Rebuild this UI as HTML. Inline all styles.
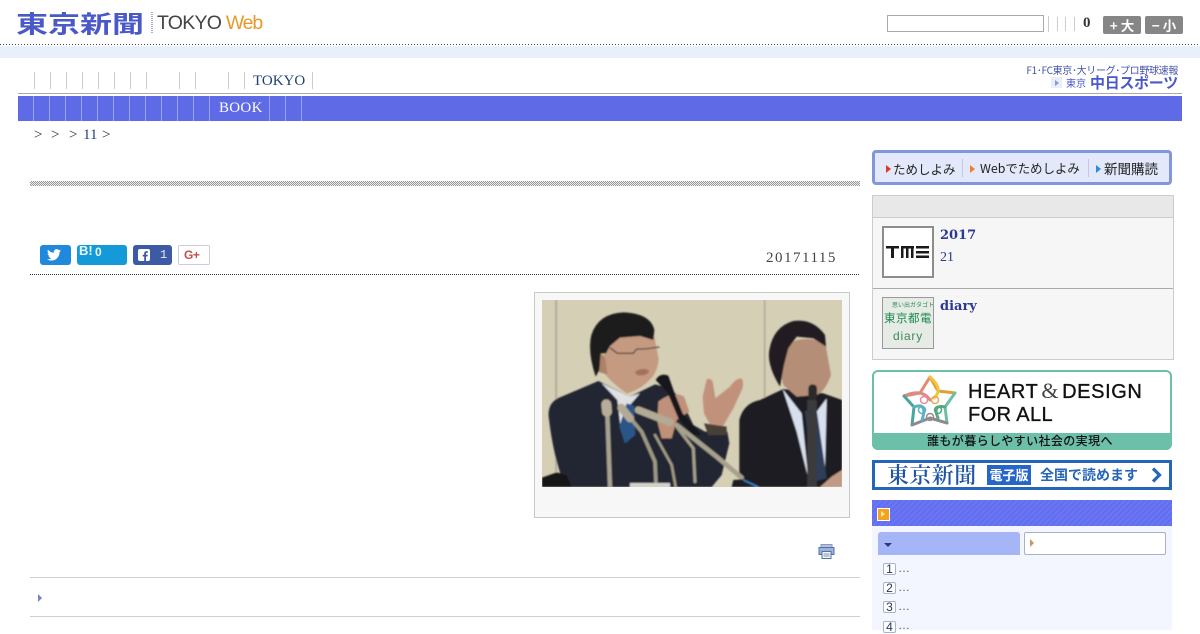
<!DOCTYPE html>
<html lang="ja">
<head>
<meta charset="utf-8">
<title>東京新聞 TOKYO Web</title>
<style>
html,body{margin:0;padding:0;background:#fff}
body{width:1200px;height:630px;overflow:hidden;position:relative;font-family:"Liberation Serif","Noto Serif CJK SC",serif}
.a{position:absolute;white-space:nowrap}
.s{font-family:"Liberation Sans","Noto Sans CJK JP",sans-serif}
.j{font-family:"Noto Sans CJK JP",sans-serif}
.v{position:absolute;width:1px}
.d{background:repeating-linear-gradient(90deg,#445 0 1px,transparent 1px 3px);height:1px}
.b{width:11px;height:10px;border:1px solid #a8b4cc;border-radius:2px;background:#fff;font-size:12px;line-height:10px;text-align:center;color:#2a3560}
.e{left:898px;font-size:12px;line-height:14px;color:#555;letter-spacing:.3px}
</style>
</head>
<body>
<!-- Header -->
<div class="a j" style="left:16px;top:1px;font-size:32px;line-height:44px;font-weight:700;color:#4a58c8;transform:scaleY(.74);transform-origin:0 50%">東京新聞</div>
<div class="a" style="left:151px;top:12px;width:2px;height:22px;background:repeating-linear-gradient(180deg,#a8acc0 0 1px,transparent 1px 2px)"></div>
<div class="a s" style="left:157px;top:11px;font-size:19.500px;line-height:24px;color:#444;letter-spacing:-.75px">TOKYO <span style="color:#e8982a;letter-spacing:-1.2px">Web</span></div>
<div class="a" style="left:887px;top:15px;width:155px;height:15px;border:1px solid #aaa;background:#fff"></div>
<div class="v" style="left:1048px;top:16px;height:16px;background:#ccc"></div>
<div class="v" style="left:1057px;top:17px;height:14px;background:#ccc"></div>
<div class="v" style="left:1065px;top:17px;height:14px;background:#ccc"></div>
<div class="v" style="left:1074px;top:17px;height:14px;background:#ccc"></div>
<div class="a" style="left:1083px;top:14px;font-size:15px;line-height:18px;font-weight:700;color:#333">0</div>
<div class="a j" style="left:1103px;top:16px;width:38px;height:18px;background:#868686;border-radius:2px;color:#fff;font-size:13.500px;font-weight:700;line-height:18px;text-align:center">+ 大</div>
<div class="a j" style="left:1145px;top:16px;width:38px;height:18px;background:#868686;border-radius:2px;color:#fff;font-size:13.500px;font-weight:700;line-height:18px;text-align:center">− 小</div>
<div class="a d" style="left:0;top:44px;width:1200px"></div>
<div class="a" style="left:0;top:46px;width:1200px;height:12px;background:#e9effb"></div>

<!-- Top nav -->
<div class="v" style="left:34px;top:72px;height:17px;background:#ccc"></div>
<div class="v" style="left:50px;top:72px;height:17px;background:#ccc"></div>
<div class="v" style="left:66px;top:72px;height:17px;background:#ccc"></div>
<div class="v" style="left:82px;top:72px;height:17px;background:#ccc"></div>
<div class="v" style="left:98px;top:72px;height:17px;background:#ccc"></div>
<div class="v" style="left:114px;top:72px;height:17px;background:#ccc"></div>
<div class="v" style="left:130px;top:72px;height:17px;background:#ccc"></div>
<div class="v" style="left:146px;top:72px;height:17px;background:#ccc"></div>
<div class="v" style="left:179px;top:72px;height:17px;background:#ccc"></div>
<div class="v" style="left:195px;top:72px;height:17px;background:#ccc"></div>
<div class="v" style="left:228px;top:72px;height:17px;background:#ccc"></div>
<div class="v" style="left:244px;top:72px;height:17px;background:#ccc"></div>
<div class="v" style="left:312px;top:72px;height:17px;background:#ccc"></div>
<div class="a" style="left:253px;top:72px;font-size:15px;line-height:18px;color:#1f3f77">TOKYO</div>
<div class="a j" style="right:22px;top:63px;font-size:10px;line-height:13px;color:#4452a8;letter-spacing:-.33px">F1･FC東京･大リーグ･プロ野球速報</div>
<div class="a" style="left:1051px;top:77px;width:11px;height:11px;background:#e8eefa"></div>
<div class="a" style="left:1055px;top:80px;width:0;height:0;border-left:4px solid #8a9ad0;border-top:3px solid transparent;border-bottom:3px solid transparent"></div>
<div class="a j" style="left:1066px;top:76px;font-size:10px;line-height:14px;color:#4a58c8">東京</div>
<div class="a j" style="left:1090px;top:73px;font-size:15px;line-height:19px;font-weight:700;color:#4a58c8;letter-spacing:-.3px">中日スポーツ</div>
<div class="a" style="left:18px;top:93px;width:1164px;height:1px;background:#aaa"></div>

<!-- Blue nav -->
<div class="a" style="left:18px;top:96px;width:1164px;height:25px;background:#5f6ae6"></div>
<div class="v" style="left:33px;top:96px;height:25px;background:#9aa2ee"></div>
<div class="v" style="left:49px;top:96px;height:25px;background:#9aa2ee"></div>
<div class="v" style="left:65px;top:96px;height:25px;background:#9aa2ee"></div>
<div class="v" style="left:81px;top:96px;height:25px;background:#9aa2ee"></div>
<div class="v" style="left:97px;top:96px;height:25px;background:#9aa2ee"></div>
<div class="v" style="left:113px;top:96px;height:25px;background:#9aa2ee"></div>
<div class="v" style="left:129px;top:96px;height:25px;background:#9aa2ee"></div>
<div class="v" style="left:145px;top:96px;height:25px;background:#9aa2ee"></div>
<div class="v" style="left:161px;top:96px;height:25px;background:#9aa2ee"></div>
<div class="v" style="left:177px;top:96px;height:25px;background:#9aa2ee"></div>
<div class="v" style="left:193px;top:96px;height:25px;background:#9aa2ee"></div>
<div class="v" style="left:209px;top:96px;height:25px;background:#9aa2ee"></div>
<div class="v" style="left:269px;top:96px;height:25px;background:#9aa2ee"></div>
<div class="v" style="left:285px;top:96px;height:25px;background:#9aa2ee"></div>
<div class="v" style="left:301px;top:96px;height:25px;background:#9aa2ee"></div>
<div class="a" style="left:219px;top:99px;font-size:15px;line-height:18px;letter-spacing:.3px;color:#fff">BOOK</div>

<!-- Breadcrumb -->
<div class="a" style="left:34px;top:127px;font-size:15px;line-height:17px;color:#333">&gt;</div>
<div class="a" style="left:51px;top:127px;font-size:15px;line-height:17px;color:#333">&gt;</div>
<div class="a" style="left:69px;top:127px;font-size:15px;line-height:17px;color:#333">&gt;</div>
<div class="a" style="left:83px;top:127px;font-size:15px;line-height:17px;color:#2b3a80">11</div>
<div class="a" style="left:102px;top:127px;font-size:15px;line-height:17px;color:#333">&gt;</div>

<!-- Main column -->
<div class="a" style="left:30px;top:181px;width:830px;height:5px;background:repeating-conic-gradient(#999 0 25%,#ececec 0 50%) 0 0/2px 2px"></div>

<!-- Social buttons -->
<div class="a" style="left:40px;top:245px;width:31px;height:20px;background:#2189dc;border-radius:3px"></div>
<svg class="a" style="left:47px;top:249px" width="14" height="12" viewBox="0 0 24 20"><path fill="#fff" d="M24 2.400c-.9.400-1.800.700-2.800.800 1-.6 1.800-1.600 2.200-2.700-1 .600-2 1-3.100 1.200C19.300.700 18 0 16.600 0c-2.700 0-4.900 2.200-4.900 4.900 0 .400 0 .800.100 1.100C7.700 5.800 4.100 3.900 1.700.900c-.4.700-.7 1.600-.7 2.500 0 1.700.900 3.200 2.200 4.100-.8 0-1.600-.2-2.200-.6v.100c0 2.400 1.700 4.400 3.900 4.800-.4.100-.8.200-1.300.2-.3 0-.6 0-.9-.1.600 2 2.400 3.400 4.600 3.400-1.700 1.300-3.800 2.100-6.100 2.100-.4 0-.8 0-1.200-.1 2.200 1.400 4.800 2.200 7.500 2.200 9.100 0 14-7.500 14-14v-.6c1-.7 1.800-1.600 2.500-2.500z"/></svg>
<div class="a" style="left:77px;top:245px;width:50px;height:20px;background:#149ad8;border-radius:3px"></div>
<div class="a s" style="left:79px;top:244px;font-size:13px;line-height:14px;font-weight:700;color:#e8f6fc">B!</div>
<div class="a s" style="left:95px;top:245px;font-size:12px;line-height:14px;font-weight:700;color:#e8f6fc">0</div>
<div class="a" style="left:133px;top:245px;width:39px;height:20px;background:#3d5aa5;border-radius:3px"></div>
<div class="a" style="left:138px;top:249px;width:12px;height:12px;background:#fff;border-radius:2px"></div>
<svg class="a" style="left:138px;top:249px" width="12" height="12" viewBox="0 0 12 12"><path fill="#3d5aa5" d="M8 12V7.500h1.500l.3-1.800H8V4.700c0-.5.200-.9.900-.9h1V2.200C9.600 2.100 9.100 2.100 8.500 2.100 7.100 2.100 6.200 3 6.200 4.500v1.200H4.700v1.800h1.500V12z"/></svg>
<div class="a" style="left:160px;top:248px;font-size:12px;line-height:14px;color:#e8ecf8;font-family:'Liberation Mono',monospace">1</div>
<div class="a" style="left:178px;top:245px;width:30px;height:18px;border:1px solid #ccd;border-radius:2px;background:#fff"></div>
<div class="a s" style="left:184px;top:248px;font-size:12px;line-height:14px;font-weight:700;color:#c0504d;letter-spacing:-.5px">G+</div>

<div class="a" style="left:766px;top:249px;font-size:15px;line-height:18px;letter-spacing:1.500px;color:#444">20171115</div>
<div class="a d" style="left:30px;top:274px;width:830px;background:repeating-linear-gradient(90deg,#333 0 1px,transparent 1px 2px)"></div>

<!-- Photo -->
<div class="a" style="left:534px;top:292px;width:314px;height:224px;border:1px solid #c8c8c8;background:#f7f7f7"></div>
<svg class="a" style="left:542px;top:300px" width="300" height="187" viewBox="36 45 900 561" preserveAspectRatio="none">
<defs><filter id="bl" x="-5%" y="-5%" width="110%" height="110%"><feGaussianBlur stdDeviation="2.500"/></filter></defs>
<rect x="36" y="45" width="900" height="561" fill="#d5cfb6"/>
<g filter="url(#bl)">
<rect x="76" y="45" width="5" height="520" fill="#aaa592"/>
<rect x="702" y="45" width="4" height="300" fill="#a8a391"/>
<!-- left man body -->
<path fill="#232732" d="M106 606 Q70 520 56 395 Q52 350 95 335 L205 288 300 335 375 298 Q430 310 455 345 L490 420 525 440 592 440 598 475 575 570 545 606Z"/>
<path fill="#131316" d="M36 578 L80 562 110 570 125 606 36 606Z"/>
<path fill="#dfe0e4" d="M215 295 262 345 272 430 300 360 330 325 300 335Z"/>
<path fill="#2c5488" d="M290 355 312 362 316 450 285 475 268 425Z"/>
<path fill="#c49a80" d="M222 190 Q235 120 300 130 L372 150 386 222 Q382 265 358 285 335 312 290 325 240 290 222 262Z"/>
<path fill="#ab8269" d="M190 205 Q215 195 226 222 L232 268 208 262Z"/>
<path fill="#1d1b1e" d="M197 275 Q172 200 184 150 Q205 85 280 82 Q362 85 373 135 L370 165 330 153 270 158 240 183 228 205 212 205 208 255Z"/>
<path fill="none" stroke="#5b4a40" stroke-width="4" d="M240 188 L262 205 L310 205 L320 192 L345 192 L388 186"/>
<path fill="#a5705e" d="M315 260 Q340 245 358 258 350 275 320 270Z"/>
<!-- mic hand -->
<path fill="#c0917a" d="M385 350 Q430 315 462 335 L478 380 440 405 425 460 395 460 382 410Z"/>
<path fill="#17181c" d="M377 285 Q390 262 415 272 L432 320 458 385 515 450 490 450 445 400 412 322Z"/>
<!-- gesture hand -->
<path fill="#c2917c" d="M530 284 Q540 276 548 290 L556 340 L600 305 Q622 275 636 282 Q644 300 632 322 L610 370 578 425 545 428 522 385 518 335Z"/>
<path fill="#4a3f36" d="M522 415 590 425 590 450 535 450Z"/>
<!-- right man -->
<path fill="#1c1d22" d="M628 606V405Q640 355 690 345L760 312 880 325 936 345V606Z"/>
<path fill="#d8dfee" d="M758 312 815 385 835 580 800 440Z"/>
<path fill="#d8dfee" d="M890 340 860 380 885 560Z"/>
<path fill="#2e3d58" d="M825 378 860 375 890 580 850 590Z"/>
<path fill="#b48e76" d="M770 180 Q810 150 885 170 L903 270 Q885 320 860 330 L800 335 760 300 745 240Z"/>
<path fill="#211e20" d="M750 305 Q710 240 718 195 Q730 125 790 108 Q850 100 885 150 L888 185 850 160 800 155 775 190 762 240Z"/>
<rect x="835" y="298" width="26" height="50" rx="12" fill="#2c2b2c"/>
<rect x="832" y="345" width="28" height="261" fill="#3a3a3c"/>
<path fill="#c09a86" d="M870 606 905 575 936 555V606Z"/>
<!-- Mic stands -->
<g fill="none" stroke-linecap="round">
<path stroke="#a7a291" stroke-width="13" d="M232 385 240 606"/>
<path stroke="#b8ad9a" stroke-width="30" d="M229 358 231 380"/>
<path stroke="#9e9884" stroke-width="11" d="M285 380 335 440 375 530 378 596"/>
<path stroke="#b3a994" stroke-width="24" d="M274 368 300 400"/>
<path stroke="#a09a84" stroke-width="8" d="M375 450 425 540 437 606"/>
<path stroke="#a59f8a" stroke-width="9" d="M440 425 490 490 495 590"/>
<path stroke="#b2aa94" stroke-width="22" d="M325 375 420 412"/>
<path stroke="#a6a08c" stroke-width="14" d="M440 420 560 515 635 578"/>
</g>
<rect x="300" y="594" width="120" height="12" fill="#d4d2cc"/>
<path fill="#1b1c20" d="M605 606 610 585 650 582 690 606Z"/>
<path fill="none" stroke="#3a7fc8" stroke-width="5" d="M640 585 685 606"/>
</g>
</svg>

<!-- Print icon -->
<svg class="a" style="left:818px;top:544px" width="17" height="15" viewBox="0 0 17 15">
<rect x="3" y="0.500" width="11" height="4" fill="#b4c2e0" stroke="#8a9ab8"/>
<rect x="1" y="3.500" width="15" height="7" fill="#9ab3dd" stroke="#56719e"/>
<rect x="4" y="7.500" width="9" height="7" fill="#f4f6fb" stroke="#56719e"/>
<path stroke="#7e93bb" d="M5.500 10h6M5.500 12h6"/>
</svg>

<div class="a" style="left:30px;top:577px;width:830px;height:1px;background:#cfcfcf"></div>
<div class="a" style="left:38px;top:594px;width:0;height:0;border-left:4px solid #7484c4;border-top:4px solid transparent;border-bottom:4px solid transparent"></div>
<div class="a" style="left:30px;top:616px;width:830px;height:1px;background:#cfcfcf"></div>

<!-- Sidebar -->
<div class="a" style="left:872px;top:150px;width:294px;height:29px;border:3px solid #8296dc;border-radius:4px;background:#e3e9fa"></div>
<div class="a" style="left:886px;top:165px;width:0;height:0;border-left:5px solid #e0362c;border-top:4px solid transparent;border-bottom:4px solid transparent"></div>
<div class="a j" style="left:893px;top:159px;font-size:12.500px;line-height:19px;color:#222">ためしよみ</div>
<div class="v" style="left:962px;top:159px;height:18px;background:#bfc8e4"></div>
<div class="a" style="left:970px;top:165px;width:0;height:0;border-left:5px solid #f08030;border-top:4px solid transparent;border-bottom:4px solid transparent"></div>
<div class="a j" style="left:980px;top:159px;font-size:12.400px;line-height:19px;color:#222">Webでためしよみ</div>
<div class="v" style="left:1088px;top:159px;height:18px;background:#bfc8e4"></div>
<div class="a" style="left:1096px;top:165px;width:0;height:0;border-left:5px solid #2c8ae0;border-top:4px solid transparent;border-bottom:4px solid transparent"></div>
<div class="a j" style="left:1104px;top:159px;font-size:13.500px;line-height:19px;color:#222">新聞購読</div>

<div class="a" style="left:872px;top:195px;width:300px;height:163px;border:1px solid #ccc;background:#f6f6f6"></div>
<div class="a" style="left:873px;top:196px;width:300px;height:21px;background:#e8e8e8;border-bottom:1px solid #ccc"></div>
<div class="a" style="left:882px;top:226px;width:48px;height:48px;border:2px solid #8c8c8c;background:#fff"></div>
<svg class="a" style="left:886px;top:245px" width="44" height="14" viewBox="0 0 44 14">
<g fill="#1a1a1a">
<rect x="0" y="1" width="13" height="2.500"/><rect x="5" y="1" width="3" height="12"/>
<rect x="15" y="1" width="13" height="2.500"/><rect x="15" y="1" width="2.500" height="12"/><rect x="20" y="1" width="2.500" height="12"/><rect x="25" y="1" width="2.500" height="12"/>
<rect x="30" y="1" width="13" height="2.500"/><rect x="30" y="6" width="13" height="2.500"/><rect x="30" y="10.500" width="13" height="2.500"/>
</g></svg>
<div class="a" style="left:940px;top:227px;font-family:'DejaVu Serif',serif;font-size:13px;line-height:18px;font-weight:700;color:#2b3990">2017</div>
<div class="a" style="left:940px;top:249px;font-size:14px;line-height:17px;color:#2b3990">21</div>
<div class="a" style="left:873px;top:288px;width:300px;height:1px;background:#aaa"></div>
<div class="a" style="left:882px;top:297px;width:50px;height:50px;border:1px solid #999;background:#e6ebe5"></div>
<div class="a j" style="left:892px;top:301px;font-size:6px;line-height:8px;color:#2a8a55">思い出ガタゴト</div>
<div class="a j" style="left:884px;top:311px;font-size:11.500px;line-height:14px;color:#1d8c50;letter-spacing:.5px">東京都電</div>
<div class="a s" style="left:893px;top:329px;font-size:12px;line-height:14px;color:#3c8a5a;letter-spacing:.8px">diary</div>
<div class="a" style="left:940px;top:298px;font-family:'DejaVu Serif',serif;font-size:13px;line-height:18px;font-weight:700;color:#2b3990">diary</div>

<!-- Heart & design banner -->
<div class="a" style="left:872px;top:370px;width:296px;height:76px;border:2px solid #6cbfa8;border-radius:6px;background:#fff;overflow:hidden"></div>
<div class="a" style="left:872px;top:433px;width:300px;height:17px;background:#6cbfa8;border-radius:0 0 6px 6px"></div>
<div class="a j" style="left:927px;top:433px;font-size:12px;line-height:16px;font-weight:500;color:#111;letter-spacing:.4px">誰もが暮らしやすい社会の実現へ</div>
<svg class="a" style="left:902px;top:374px" width="56" height="56" viewBox="0 0 56 56" fill="none" stroke-width="3" stroke-linecap="round">
<path stroke="#e0a030" d="M28 3 36 17 53 19"/>
<path stroke="#e38b6f" d="M28 3 18 19 2 22"/>
<path stroke="#f0c640" d="M28 3Q42 15 32 24"/>
<path stroke="#e08888" d="M2 22Q20 14 28 26"/>
<path stroke="#4aa59a" d="M2 22 12 33 10 51"/>
<path stroke="#6cbfa8" d="M53 19 43 33 45 49"/>
<path stroke="#8a8a90" d="M10 51 28 44 45 49"/>
<path stroke="#5ab0c4" d="M12 33Q26 28 20 46"/>
<path stroke="#5aa880" d="M43 33Q30 30 36 44"/>
<circle cx="22" cy="26" r="3.500" stroke="#e888a0" stroke-width="1.500"/>
<circle cx="33" cy="26" r="3.500" stroke="#e8a850" stroke-width="1.500"/>
<circle cx="20" cy="36" r="3.500" stroke="#5ab0c4" stroke-width="1.500"/>
<circle cx="36" cy="36" r="3.500" stroke="#4aa880" stroke-width="1.500"/>
<circle cx="28" cy="43" r="3.500" stroke="#a08888" stroke-width="1.500"/>
</svg>
<div class="a s" style="left:968px;top:379px;font-size:20px;line-height:24px;color:#111;letter-spacing:.6px;-webkit-text-stroke:.35px #111">HEART<span style="font-family:'Liberation Serif',serif;color:#444;-webkit-text-stroke:0;font-size:22px;margin:0 3px">&amp;</span>DESIGN</div>
<div class="a s" style="left:968px;top:403px;font-size:20px;line-height:24px;color:#111;letter-spacing:.4px;-webkit-text-stroke:.35px #111">FOR ALL</div>

<!-- Tokyo shimbun banner -->
<div class="a" style="left:872px;top:460px;width:294px;height:24px;border:3px solid #2566b8;background:#fff"></div>
<div class="a" style="left:887px;top:461px;font-family:'Noto Serif CJK SC',serif;font-size:22px;line-height:28px;font-weight:600;color:#1f55a5;letter-spacing:.4px">東京新聞</div>
<div class="a j" style="left:987px;top:465px;width:44px;height:20px;background:#2566c8;color:#fff;font-size:13px;line-height:20px;font-weight:700;text-align:center">電子版</div>
<div class="a j" style="left:1040px;top:465px;font-size:14px;line-height:20px;font-weight:700;color:#2566b8">全国で読めます</div>
<svg class="a" style="left:1151px;top:467px" width="11" height="16" viewBox="0 0 11 16"><path d="M2 1.500 8.500 8 2 14.500" fill="none" stroke="#2566b8" stroke-width="3.200"/></svg>

<!-- Ranking -->
<div class="a" style="left:872px;top:500px;width:300px;height:26px;background:repeating-linear-gradient(135deg,#626ef0 0 2px,#6a76f2 2px 4px)"></div>
<div class="a" style="left:877px;top:508px;width:11px;height:11px;background:#f5a31e;border:1px solid #fff"></div>
<div class="a" style="left:881px;top:511px;width:0;height:0;border-left:4px solid #ffe9a0;border-top:3px solid transparent;border-bottom:3px solid transparent"></div>
<div class="a" style="left:872px;top:526px;width:300px;height:104px;background:#f4f6ff"></div>
<div class="a" style="left:878px;top:532px;width:142px;height:23px;background:#a5b5f5;border-radius:3px 3px 0 0"></div>
<div class="a" style="left:884px;top:543px;width:0;height:0;border-top:4px solid #2b3990;border-left:4px solid transparent;border-right:4px solid transparent"></div>
<div class="a" style="left:1024px;top:532px;width:140px;height:21px;border:1px solid #aab0c8;border-radius:2px;background:#fff"></div>
<div class="a" style="left:1030px;top:539px;width:0;height:0;border-left:4px solid #c8946a;border-top:4px solid transparent;border-bottom:4px solid transparent"></div>

<div class="a s b" style="left:883px;top:563px">1</div>
<div class="a s e" style="top:561px">…</div>
<div class="a s b" style="left:883px;top:582px">2</div>
<div class="a s e" style="top:580px">…</div>
<div class="a s b" style="left:883px;top:601px">3</div>
<div class="a s e" style="top:599px">…</div>
<div class="a s b" style="left:883px;top:621px">4</div>
<div class="a s e" style="top:618px">…</div>
</body>
</html>
